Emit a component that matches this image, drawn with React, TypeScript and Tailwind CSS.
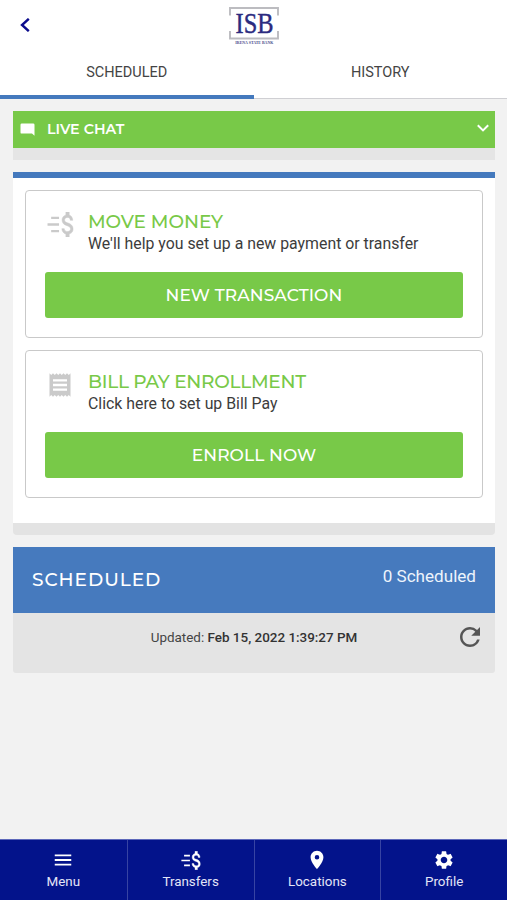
import type { ReactNode } from "react";
import { MdLocationOn, MdMenu, MdReceipt, MdRefresh, MdSettings } from "react-icons/md";

// ── Types ──────────────────────────────────────────────────────────────
interface ActionCardProps {
  icon: ReactNode;
  title: string;
  titleClass: string;
  text: string;
  button: string;
}

interface NavItem {
  label: string;
  icon: ReactNode;
}

// ── Icons ──────────────────────────────────────────────────────────────
function TransferIcon({ className = "" }: { className?: string }) {
  return (
    <svg viewBox="0 0 26 24" className={className} fill="currentColor">
      <path d="M4 4.500h7.600v2.200H4zM0.500 10.900h11.100v2.200H0.500zM4 17.300h7.600v2.200H4z" />
      <g transform="translate(7.600 -4) scale(1.060 1.333)" stroke="currentColor" strokeWidth={0.4}>
        <path d="M11.800 10.900c-2.270-.590-3-1.200-3-2.150 0-1.090 1.010-1.850 2.700-1.850 1.780 0 2.440.850 2.500 2.100h2.210c-.070-1.720-1.120-3.300-3.210-3.810V3h-3v2.160c-1.940.420-3.500 1.680-3.500 3.610 0 2.310 1.910 3.460 4.700 4.130 2.500.600 3 1.480 3 2.410 0 .690-.490 1.790-2.700 1.790-2.060 0-2.870-.920-2.980-2.100h-2.200c.120 2.190 1.760 3.420 3.680 3.830V21h3v-2.150c1.950-.370 3.500-1.500 3.500-3.550 0-2.840-2.430-3.810-4.700-4.400z" />
      </g>
    </svg>
  );
}

function ChatIcon() {
  return (
    <svg viewBox="0 0 15 13" className="h-[13px] w-[15px]" fill="currentColor">
      <path d="M1.800 0.600h11.400q1.300 0 1.300 1.200v10.900L12 10.600H1.800Q0.500 10.600 0.500 9.400V1.800Q0.500 0.600 1.800 0.600z" />
    </svg>
  );
}

function Logo() {
  return (
    <svg viewBox="0 -4 50 44" className="-mt-1 h-[44px] w-[50px] overflow-visible">
      <path d="M1 8.500V1h48v7.500M1 24v7.500h48V24" fill="none" stroke="#bcbcc0" strokeWidth={1.9} />
      <text x="25.500" y="25.500" textAnchor="middle" textLength="38" lengthAdjust="spacingAndGlyphs" fontFamily="Liberation Serif, serif" fontSize="28.500" fill="#2b2b80" stroke="#2b2b80" strokeWidth={0.4}>ISB</text>
      <text x="25.300" y="37" textAnchor="middle" textLength="38" lengthAdjust="spacingAndGlyphs" fontFamily="Liberation Serif, serif" fontWeight="bold" fontSize="4.600" fill="#4a4a8c">IRENA STATE BANK</text>
    </svg>
  );
}

// ── ActionCard ─────────────────────────────────────────────────────────
function ActionCard({ icon, title, titleClass, text, button }: ActionCardProps) {
  return (
    <section className="h-[148px] rounded-[4px] border-[1.500px] border-[#c9c9c9] px-[19px] pt-5">
      <div className="flex h-[61px]">
        <div className="flex w-[43px] shrink-0 justify-start text-[#cacaca]">{icon}</div>
        <div>
          <h2 className={`font-['Montserrat','Lato',sans-serif] leading-[22px] font-medium text-[#78c948] ${titleClass}`}>{title}</h2>
          <p className="text-[15.850px] leading-[21px] whitespace-nowrap text-[#3c3c3c]">{text}</p>
        </div>
      </div>
      <button className="h-[46px] w-full rounded-[3px] bg-[#78c948] pt-px font-['Montserrat','Lato',sans-serif] text-[17px] font-medium tracking-[0.100px] text-white">
        {button}
      </button>
    </section>
  );
}

const NAV: NavItem[] = [
  { label: "Menu", icon: <MdMenu className="size-[22px]" /> },
  { label: "Transfers", icon: <TransferIcon className="h-[19px] w-[20px]" /> },
  { label: "Locations", icon: <MdLocationOn className="size-[22px]" /> },
  { label: "Profile", icon: <MdSettings className="size-[22px]" /> },
];

export default function App() {
  return (
    <div className="flex h-[900px] w-[507px] flex-col overflow-hidden bg-[#f2f2f2] font-['Roboto',sans-serif] text-[#444]">
      <header className="h-[99px] shrink-0 bg-white">
        <div className="grid h-[50px] grid-cols-3 pt-[7px]">
          <button aria-label="Back" className="flex h-9 items-center pl-[20px] text-[#0c0c8c]">
            <svg viewBox="0 0 10 14" className="h-[14px] w-[10px]" fill="none" stroke="currentColor" strokeWidth={2.4}>
              <path d="M8.800 0.800 2 7l6.800 6.200" />
            </svg>
          </button>
          <div className="flex justify-center"><Logo /></div>
        </div>
        <nav className="grid h-[49px] grid-cols-2 text-center text-[14.500px] leading-[44px]">
          <button className="border-b-[4px] border-[#4479bd]">SCHEDULED</button>
          <button className="border-b border-[#cfcfd3] pb-[3px]">HISTORY</button>
        </nav>
      </header>

      <main className="flex-1 pt-3 pr-3 pl-[13px]">
        <div className="flex h-[37px] items-center bg-[#78c948] pr-[6px] pl-[7px] text-white">
          <ChatIcon />
          <span className="ml-[12px] flex-1 font-['Montserrat','Lato',sans-serif] text-[14.300px] font-semibold">LIVE CHAT</span>
          <svg viewBox="0 0 12 8" className="mb-[3px] h-[8px] w-[12px]" fill="none" stroke="currentColor" strokeWidth={2}>
            <path d="m0.800 1.200 5.200 5.200 5.200-5.200" />
          </svg>
        </div>
        <div className="h-3 bg-[#e5e5e5]" />

        <div className="mt-[12px] h-[351px] border-t-[6px] border-[#4479bd] bg-white px-3 pt-3">
          <div className="flex flex-col gap-3">
            <ActionCard
              icon={<TransferIcon className="mt-[1px] ml-[2px] h-[25px] w-[27px]" />}
              title="MOVE MONEY"
              titleClass="text-[18.500px] tracking-[-0.050px]"
              text="We'll help you set up a new payment or transfer"
              button="NEW TRANSACTION"
            />
            <ActionCard
              icon={<MdReceipt className="ml-[1px] size-[28px]" />}
              title="BILL PAY ENROLLMENT"
              titleClass="text-[18.500px] tracking-[-0.280px]"
              text="Click here to set up Bill Pay"
              button="ENROLL NOW"
            />
          </div>
        </div>
        <div className="h-3 rounded-b-[4px] bg-[#e3e3e3]" />

        <section className="mt-[12px]">
          <div className="flex h-[66px] items-center justify-between bg-[#467abe] px-[19px] text-white">
            <h2 className="font-['Montserrat','Lato',sans-serif] text-[18.500px] font-medium tracking-[0.950px]">SCHEDULED</h2>
            <span className="pb-1.5 text-[17.100px] text-[#edf4fc]">0 Scheduled</span>
          </div>
          <div className="grid h-[60px] grid-cols-[1fr_auto_1fr] rounded-b-[3px] bg-[#e4e4e4] pt-[9px] text-[13.450px]">
            <p className="col-start-2 pt-[6px] text-[#444]">
              Updated: <span className="font-medium text-[#333]">Feb 15, 2022 1:39:27 PM</span>
            </p>
            <MdRefresh className="mr-[10px] size-[30px] justify-self-end text-[#555]" />
          </div>
        </section>
      </main>

      <nav className="grid h-[61px] shrink-0 grid-cols-4 border-t border-[#5d68ba] bg-[#03138b] text-white">
        {NAV.map((item) => (
          <button key={item.label} className="flex flex-col items-center border-l border-[#3744a3] pt-[9px] first:border-l-0">
            <span className="flex h-[22px] items-center">{item.icon}</span>
            <span className="text-[13.400px] leading-[21px] text-[#e3e5f7]">{item.label}</span>
          </button>
        ))}
      </nav>
    </div>
  );
}
